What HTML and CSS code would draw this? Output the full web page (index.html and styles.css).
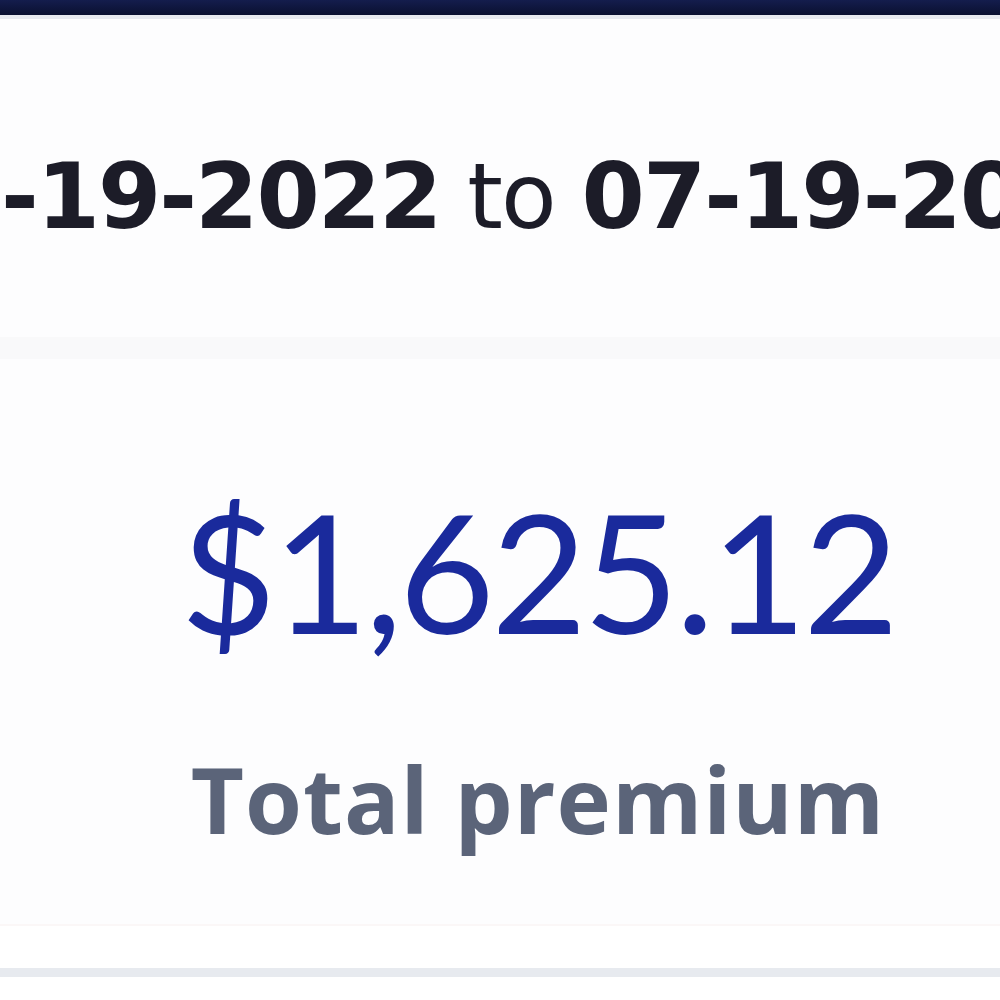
FILE: index.html
```html
<html>
    <head>
        <title>Policy Summary</title>
        <link rel="stylesheet" href="styles.css">
    </head>
    <body>
        <div class="top_bar"></div>
        <div class="page">
            <div class="term_row">
                <span class="term"><b>07-19-2022</b> to <b>07-19-2023</b></span>
            </div>

            <div class="premium_card">
                <div class="premium_box">
                    <div class="amount">$1,625.12</div>
                    <div class="label">Total premium</div>
                </div>
            </div>
        </div>
        <div class="footer_line"></div>
    </body>
</html>
```

FILE: styles.css
```css
body{
    margin: 0;
    background: #ffffff;
    font-family: "DejaVu Sans", sans-serif;
    overflow: hidden;
}
.top_bar{
    height: 15px;
    background: linear-gradient(180deg, #141d4d, #0a1030);
    border-bottom: 4px solid #e7e9ef;
}
.page{
    background: #fdfdfe;
}
.term_row{
    display: flex;
    justify-content: center;
    height: 340px;
    padding-top: 132px;
    padding-left: 22px;
    box-sizing: border-box;
    white-space: nowrap;
    border-bottom: 22px solid #f9f9fa;
}
.term{
    font-size: 91px;
    color: #1c1c28;
    line-height: 1;
    letter-spacing: -2px;
}
.term b{
    font-weight: bold;
}

.premium_card{
    display: flex;
    justify-content: center;
    padding-top: 129px;
    padding-left: 76px;
    height: 567px;
    box-sizing: border-box;
    border-bottom: 2px solid #fbf7f7;
}
.premium_box{
    text-align: center;
}
.amount{
    font-family: Lato, sans-serif;
    font-size: 165px;
    line-height: 1;
    color: #1a2a9c;
    letter-spacing: -3.5px;
}
.label{
    margin-top: 100px;
    font-family: "Open Sans", sans-serif;
    font-weight: bold;
    font-size: 92px;
    line-height: 1;
    color: #5b6479;
    letter-spacing: 1px;
}
.footer_line{
    margin-top: 42px;
    height: 9px;
    background: #e7eaef;
}
```
